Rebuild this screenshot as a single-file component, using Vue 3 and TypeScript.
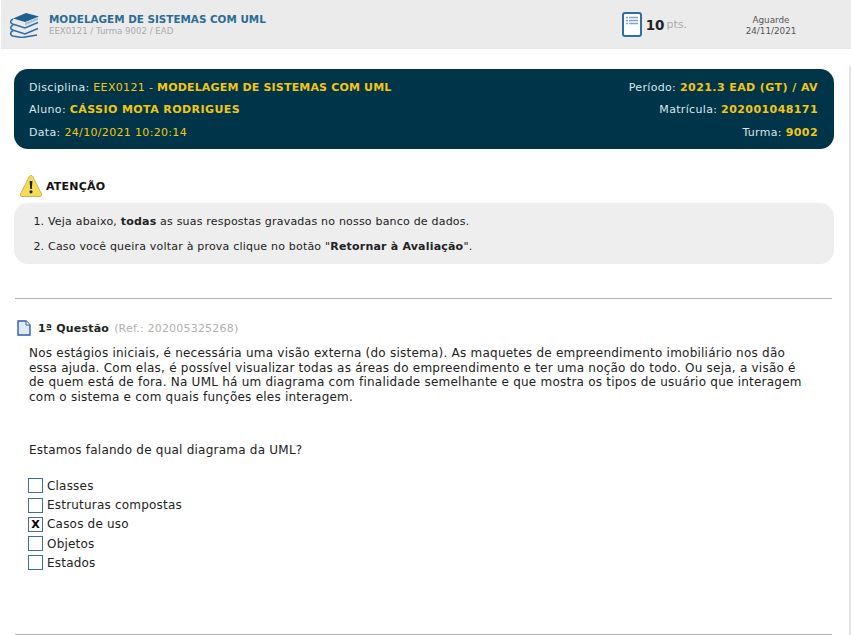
<script setup lang="ts">
const options = [
  { label: 'Classes', checked: false },
  { label: 'Estruturas compostas', checked: false },
  { label: 'Casos de uso', checked: true },
  { label: 'Objetos', checked: false },
  { label: 'Estados', checked: false },
]
</script>

<template>
  <div class="page">
    <header class="top">
      <svg class="books" viewBox="0 0 32 26" width="32" height="26">
        <path d="M17 1 L30 4.5 L16 10 L4 6.5 Z" fill="#1f5f8f" />
        <path d="M4 7 C1 8.5 1 11 3.5 12 L16 16 L29 10.5 M4 13 C1 14.5 1 17 3.5 18 L16 22 L29 16.5 M4 18.5 C1 20 1 23 3.5 24 L13 25.5 L28 23" fill="none" stroke="#2f6ea3" stroke-width="1.6" />
        <path d="M16 10.5 L29 5.5 L29 8 L16 13.5 Z" fill="#a9c4da" />
      </svg>
      <div class="course">
        <div class="course-name">MODELAGEM DE SISTEMAS COM UML</div>
        <div class="course-sub">EEX0121 / Turma 9002 / EAD</div>
      </div>
      <div class="points">
        <svg viewBox="0 0 20 25" width="20" height="25">
          <rect x="1" y="1" width="18" height="23" rx="2" fill="#fff" stroke="#2f6ea3" stroke-width="2" />
          <path d="M4 5.5h2M7 5.5h9M4 8.5h2M7 8.5h9M4 11.5h2M7 11.5h9" stroke="#7fa3c2" stroke-width="1.4" />
        </svg>
        <b>10</b><span>pts.</span>
      </div>
      <div class="wait">Aguarde<br />24/11/2021</div>
    </header>

    <main class="content">
      <section class="banner">
        <div class="banner-row"><span>Disciplina: <em>EEX0121 - <b class="tight">MODELAGEM DE SISTEMAS COM UML</b></em></span><span>Período: <em><b>2021.3 EAD (GT) / AV</b></em></span></div>
        <div class="banner-row"><span>Aluno: <em><b>CÁSSIO MOTA RODRIGUES</b></em></span><span>Matrícula: <em><b>202001048171</b></em></span></div>
        <div class="banner-row"><span>Data: <em>24/10/2021 10:20:14</em></span><span>Turma: <em><b>9002</b></em></span></div>
      </section>

      <div class="attention">
        <svg viewBox="0 0 24 24" width="24" height="24">
          <path d="M12 1.5 C13 1.5 13.6 2 14 3 L22.5 20 C23 21.5 22.3 22.5 21 22.5 L3 22.5 C1.7 22.5 1 21.5 1.5 20 L10 3 C10.4 2 11 1.5 12 1.5 Z" fill="#f5dc57" stroke="#c9b45e" />
          <path d="M10.6 7 H13.4 L12.8 15 H11.2 Z" fill="#222" />
          <circle cx="12" cy="17.8" r="1.6" fill="#222" />
        </svg>
        <b>ATENÇÃO</b>
      </div>
      <ol class="notice">
        <li>Veja abaixo, <b>todas</b> as suas respostas gravadas no nosso banco de dados.</li>
        <li>Caso você queira voltar à prova clique no botão "<b>Retornar à Avaliação</b>".</li>
      </ol>

      <hr class="rule first" />

      <section class="question">
        <div class="q-head">
          <svg viewBox="0 0 14 16" width="14" height="16">
            <path d="M1 1 H9 L13 5 V15 H1 Z" fill="#dfe9f7" stroke="#2a5ca8" stroke-width="1.4" />
            <path d="M9 1 V5 H13" fill="#fff" stroke="#2a5ca8" />
          </svg>
          <b>1ª Questão</b>
          <span>(Ref.: 202005325268)</span>
        </div>
        <p class="statement">Nos estágios iniciais, é necessária uma visão externa (do sistema). As maquetes de empreendimento imobiliário nos dão<br />essa ajuda. Com elas, é possível visualizar todas as áreas do empreendimento e ter uma noção do todo. Ou seja, a visão é<br />de quem está de fora. Na UML há um diagrama com finalidade semelhante e que mostra os tipos de usuário que interagem<br />com o sistema e com quais funções eles interagem.</p>
        <p class="ask">Estamos falando de qual diagrama da UML?</p>
        <ul class="options">
          <li v-for="o in options" :key="o.label">
            <span class="box">{{ o.checked ? 'X' : '' }}</span>{{ o.label }}
          </li>
        </ul>
      </section>

      <hr class="rule last" />
    </main>
    <div class="scroll"></div>
  </div>
</template>

<style>
html, body { margin: 0; overflow: hidden; background: #fff; }
</style>

<style scoped>
.page {
  position: relative;
  width: 851px;
  height: 635px;
  overflow: hidden;
  font-family: "DejaVu Sans", Verdana, sans-serif;
  font-size: 11px;
  color: #222;
}
.top {
  display: flex;
  align-items: center;
  height: 49px;
  margin-left: 1px;
  background: #ebebeb;
}
.books { margin: 1px 8px 0 8px; }
.course-name { font-size: 10.4px; font-weight: 700; color: #2b6c94; line-height: 13px; margin-top: 1px; }
.course-sub { font-size: 8.6px; color: #aaa; line-height: 11px; }
.points {
  display: flex;
  align-items: center;
  margin-left: auto;
  font-size: 11px;
  color: #aaa;
}
.points b { margin: 0 2px 0 4px; font-size: 13.5px; color: #222; }
.wait {
  width: 120px;
  margin-left: 24px;
  margin-right: 20px;
  padding-top: 3px;
  text-align: center;
  font-size: 8.8px;
  line-height: 11px;
  color: #555;
}
.content { padding: 20px 17px 0 14px; }
.banner {
  height: 80px;
  padding: 7.5px 16px 0 15px;
  box-sizing: border-box;
  border-radius: 14px;
  background: #003549;
  color: #d8e6ea;
  font-size: 11px;
  letter-spacing: 0.33px;
}
.banner-row { display: flex; justify-content: space-between; height: 22.5px; line-height: 22.5px; }
.banner em { font-style: normal; color: #f3c612; }
.banner b { letter-spacing: 0.42px; }
.banner b.tight { letter-spacing: 0.17px; }
.attention {
  display: flex;
  align-items: center;
  gap: 3px;
  height: 24px;
  margin: 25px 0 5px 5px;
  font-size: 11px;
  letter-spacing: 0.2px;
  color: #111;
}
.notice {
  height: 61px;
  margin: 0;
  padding: 8px 0 0 34px;
  box-sizing: border-box;
  border-radius: 14px;
  background: #eeeeee;
  font-size: 11px;
  letter-spacing: 0.2px;
}
.notice li { height: 25px; line-height: 22px; }
.rule { margin: 0 2px 0 1px; border: 0; border-top: 1.5px solid #b3b3b3; }
.rule.first { margin-top: 34px; }
.rule.last { margin-top: 62px; }
.question { padding-top: 20px; }
.q-head { display: flex; align-items: center; gap: 5px; height: 18px; margin-left: 3px; font-size: 11px; letter-spacing: 0.2px; color: #222; }
.q-head svg { margin-right: 2px; }
.q-head span { color: #b0b0b0; }
.statement { margin: 9px 0 0 15px; font-size: 12px; letter-spacing: 0.23px; line-height: 14.6px; color: #222; white-space: nowrap; }
.ask { margin: 39px 0 0 15px; font-size: 12px; letter-spacing: 0.23px; line-height: 15px; }
.options { list-style: none; margin: 18px 0 0 14px; padding: 0; font-size: 12px; letter-spacing: 0.2px; }
.options li { display: flex; align-items: center; height: 19.2px; }
.box {
  display: flex;
  align-items: center;
  justify-content: center;
  width: 13px;
  height: 13px;
  margin-right: 4px;
  border: 1px solid #3f6f9e;
  font-size: 11px;
  font-weight: 700;
  line-height: 1;
  color: #000;
}
.scroll {
  position: absolute;
  top: 66px;
  right: 0;
  bottom: 0;
  width: 2px;
  background: #e4e4e4;
}
</style>
